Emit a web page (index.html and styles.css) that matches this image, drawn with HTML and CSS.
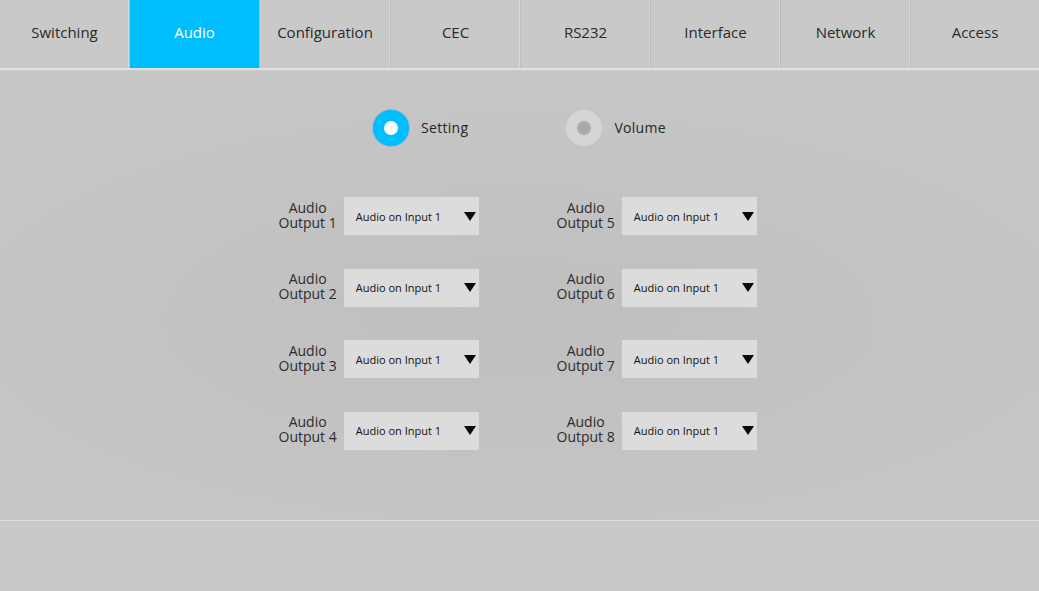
FILE: index.html
```html
<!DOCTYPE html>
<html>
<head>
<meta charset="utf-8">
<link rel="stylesheet" href="styles.css">
</head>
<body>
<nav class="tabs">
  <div class="tab">Switching</div>
  <div class="tab active">Audio</div>
  <div class="tab">Configuration</div>
  <div class="tab">CEC</div>
  <div class="tab">RS232</div>
  <div class="tab">Interface</div>
  <div class="tab">Network</div>
  <div class="tab last">Access</div>
</nav>
<main class="main">
  <div class="modes">
    <div class="mode"><span class="radio on"></span><span class="mode-label">Setting</span></div>
    <div class="mode"><span class="radio off"></span><span class="mode-label">Volume</span></div>
  </div>
  <div class="grid">
    <div class="col">
      <div class="item"><div class="label"><span class="line">Audio</span><span class="line">Output 1</span></div><div class="select"><span>Audio on Input 1</span><span class="arrow"></span></div></div>
      <div class="item"><div class="label"><span class="line">Audio</span><span class="line">Output 2</span></div><div class="select"><span>Audio on Input 1</span><span class="arrow"></span></div></div>
      <div class="item"><div class="label"><span class="line">Audio</span><span class="line">Output 3</span></div><div class="select"><span>Audio on Input 1</span><span class="arrow"></span></div></div>
      <div class="item"><div class="label"><span class="line">Audio</span><span class="line">Output 4</span></div><div class="select"><span>Audio on Input 1</span><span class="arrow"></span></div></div>
    </div>
    <div class="col">
      <div class="item"><div class="label"><span class="line">Audio</span><span class="line">Output 5</span></div><div class="select"><span>Audio on Input 1</span><span class="arrow"></span></div></div>
      <div class="item"><div class="label"><span class="line">Audio</span><span class="line">Output 6</span></div><div class="select"><span>Audio on Input 1</span><span class="arrow"></span></div></div>
      <div class="item"><div class="label"><span class="line">Audio</span><span class="line">Output 7</span></div><div class="select"><span>Audio on Input 1</span><span class="arrow"></span></div></div>
      <div class="item"><div class="label"><span class="line">Audio</span><span class="line">Output 8</span></div><div class="select"><span>Audio on Input 1</span><span class="arrow"></span></div></div>
    </div>
  </div>
</main>
<footer class="footer"></footer>
</body>
</html>
```
FILE: styles.css
```css
html, body {
  margin: 0;
  padding: 0;
}
body {
  width: 1039px;
  height: 591px;
  overflow: hidden;
  background: #c9c9c9;
  font-family: "Open Sans", "Noto Sans", sans-serif;
  color: #2b2b2b;
}
.tabs {
  display: grid;
  grid-template-columns: 130px 130px 131px 130px 130px 130px 130px 128px;
  height: 68px;
  background: #c9c9c9;
  border-bottom: 2px solid #e2e2e2;
}
.tab {
  display: flex;
  align-items: center;
  justify-content: center;
  padding-bottom: 4px;
  font-size: 15px;
  border-right: 1px solid #bdbdbd;
  box-shadow: inset -1px 0 0 #d6d6d6;
  color: #2a2a2a;
}
.tab.last {
  border-right: none;
  box-shadow: none;
}
.tab.active {
  background: #00bdfd;
  color: #ffffff;
  border-right: 1px solid #b8b8b8;
  box-shadow: none;
}
.main {
  height: 450px;
  box-sizing: border-box;
  padding-top: 40px;
  background: radial-gradient(ellipse 70% 60% at 50% 55%, #bfbfbf 0%, #c3c3c3 50%, #c7c7c7 100%);
  display: flex;
  flex-direction: column;
  align-items: center;
}
.modes {
  display: flex;
  gap: 98px;
  height: 36px;
}
.mode {
  display: flex;
  align-items: center;
  gap: 12px;
}
.radio {
  width: 36px;
  height: 36px;
  border-radius: 50%;
  display: flex;
  align-items: center;
  justify-content: center;
}
.radio::after {
  content: "";
  width: 14px;
  height: 14px;
  border-radius: 50%;
}
.radio.on {
  background: #00bdfd;
  box-shadow: 0 0 0 1px #9fb8c4;
}
.radio.on::after {
  background: #ffffff;
}
.radio.off {
  background: #d5d5d5;
}
.radio.off::after {
  background: #a9a9a9;
}
.mode-label {
  font-size: 14px;
  letter-spacing: 0.3px;
  color: #262626;
  padding-bottom: 2px;
}
.grid {
  margin-top: 51px;
  padding-right: 4px;
  display: flex;
  gap: 78px;
}
.col {
  width: 200px;
  display: flex;
  flex-direction: column;
  gap: 33.5px;
}
.item {
  display: flex;
  align-items: center;
  justify-content: flex-end;
  gap: 7px;
  height: 38px;
}
.label {
  display: flex;
  flex-direction: column;
  align-items: center;
  font-size: 14px;
  white-space: nowrap;
  color: #2b2b2b;
  margin-top: -3px;
}
.line {
  display: block;
  height: 15px;
  line-height: 15px;
}
.select {
  width: 136px;
  height: 38px;
  box-sizing: border-box;
  padding: 0 3px 0 12px;
  background: #dcdcdc;
  display: flex;
  align-items: center;
  justify-content: space-between;
  font-size: 11px;
  color: #111;
}
.arrow {
  width: 0;
  height: 0;
  border-left: 6px solid transparent;
  border-right: 6px solid transparent;
  border-top: 9px solid #0a0a0a;
}
.footer {
  height: 71px;
  border-top: 1px solid #e0e0e0;
  background: #c9c9c9;
}
```
